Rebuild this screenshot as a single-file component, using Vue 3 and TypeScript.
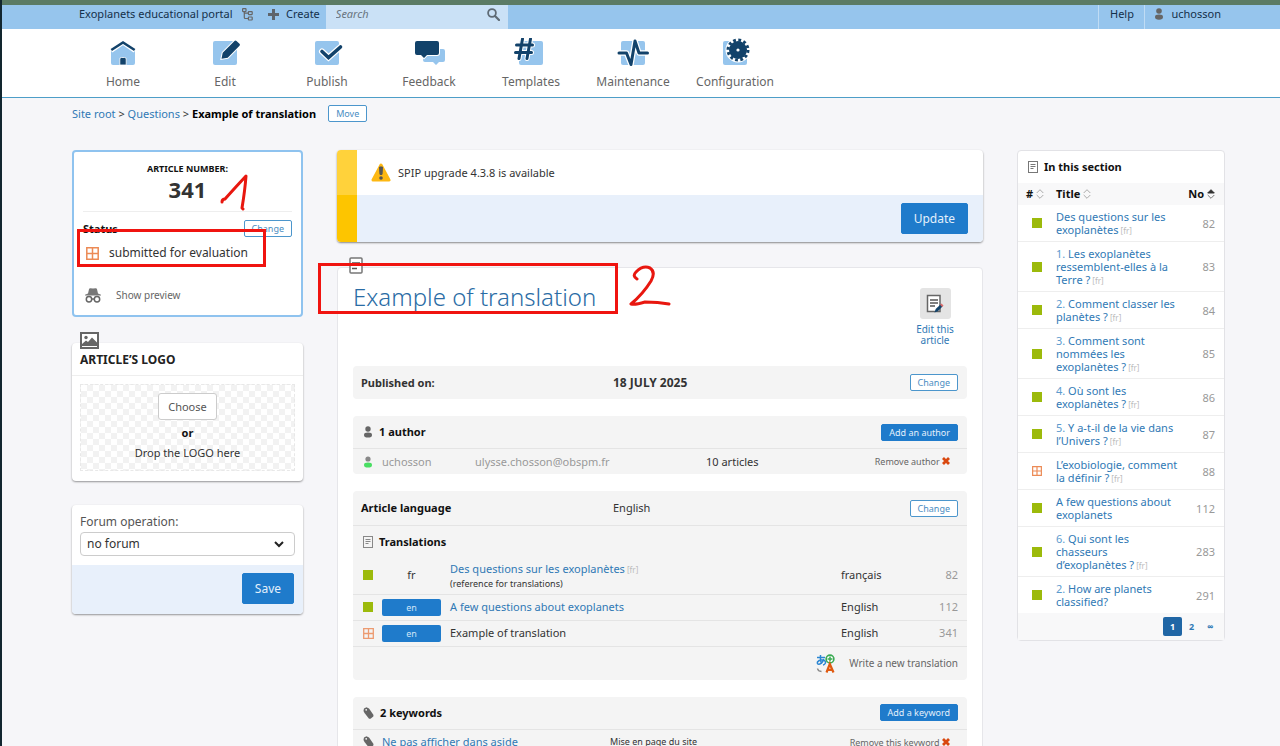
<script setup lang="ts">
import { ref } from 'vue'

type Status = 'published' | 'submitted'

interface Article {
  rank?: string
  title: string
  lang?: string
  no: number
  status: Status
}

interface Translation {
  code: string
  title: string
  note?: string
  tag?: string
  language: string
  no: number
  status: Status
  reference?: boolean
  current?: boolean
}

const menu: { id: string; label: string }[] = [
  { id: 'home', label: 'Home' },
  { id: 'edit', label: 'Edit' },
  { id: 'publish', label: 'Publish' },
  { id: 'feedback', label: 'Feedback' },
  { id: 'templates', label: 'Templates' },
  { id: 'maintenance', label: 'Maintenance' },
  { id: 'configuration', label: 'Configuration' },
]

const articles: Article[] = [
  { title: 'Des questions sur les exoplanètes', lang: 'fr', no: 82, status: 'published' },
  { rank: '1.', title: 'Les exoplanètes ressemblent-elles à la Terre\u00a0?', lang: 'fr', no: 83, status: 'published' },
  { rank: '2.', title: 'Comment classer les planètes\u00a0?', lang: 'fr', no: 84, status: 'published' },
  { rank: '3.', title: 'Comment sont nommées les exoplanètes\u00a0?', lang: 'fr', no: 85, status: 'published' },
  { rank: '4.', title: 'Où sont les exoplanètes\u00a0?', lang: 'fr', no: 86, status: 'published' },
  { rank: '5.', title: 'Y a-t-il de la vie dans l’Univers\u00a0?', lang: 'fr', no: 87, status: 'published' },
  { title: 'L’exobiologie, comment la définir\u00a0?', lang: 'fr', no: 88, status: 'submitted' },
  { title: 'A few questions about exoplanets', no: 112, status: 'published' },
  { rank: '6.', title: 'Qui sont les chasseurs d’exoplanètes\u00a0?', lang: 'fr', no: 283, status: 'published' },
  { rank: '2.', title: 'How are planets classified?', no: 291, status: 'published' },
]

const translations: Translation[] = [
  { code: 'fr', title: 'Des questions sur les exoplanètes', tag: 'fr', note: '(reference for translations)', language: 'français', no: 82, status: 'published', reference: true },
  { code: 'en', title: 'A few questions about exoplanets', language: 'English', no: 112, status: 'published' },
  { code: 'en', title: 'Example of translation', language: 'English', no: 341, status: 'submitted', current: true },
]

const search = ref('')
const forum = ref('no')
</script>

<template>
  <div class="page">
    <div class="strip"></div>
    <header class="topbar">
      <a href="#" class="site">Exoplanets educational portal</a>
      <a href="#" class="tree" aria-label="Site map">
        <svg width="11" height="13" viewBox="0 0 11 13" fill="none" stroke="#666" stroke-width="1.2">
          <rect x="0.6" y="0.6" width="3.4" height="3" rx="0.5" />
          <rect x="6.4" y="3.6" width="3.8" height="3" rx="0.5" />
          <rect x="6.4" y="9" width="3.8" height="3" rx="0.5" />
          <path d="M2.3 3.6V9.5Q2.3 10.5 3.3 10.5H6.4M2.3 5.1H6.4" />
        </svg>
      </a>
      <a href="#" class="create">
        <svg width="11" height="11" viewBox="0 0 11 11"><path d="M4 0h3v4h4v3H7v4H4V7H0V4h4z" fill="#5e646b" /></svg>
        Create
      </a>
      <form class="search" @submit.prevent>
        <input v-model="search" type="text" placeholder="Search" aria-label="Search" />
        <button type="submit" aria-label="Search">
          <svg width="13" height="13" viewBox="0 0 13 13" fill="none" stroke="#5f6b75">
            <circle cx="5" cy="5" r="3.9" stroke-width="1.8" />
            <path d="M8 8l4 4" stroke-width="2.2" stroke-linecap="round" />
          </svg>
        </button>
      </form>
      <a href="#" class="help">Help</a>
      <a href="#" class="user">
        <svg width="10" height="12" viewBox="0 0 10 12" fill="#666"><circle cx="5" cy="3" r="2.8" /><path d="M1 9q0-2.4 4-2.4T9 9q0 2.8-4 2.8T1 9z" /></svg>
        uchosson
      </a>
    </header>

    <nav class="menu">
      <a v-for="item in menu" :key="item.id" href="#">
        <svg width="36" height="30" viewBox="0 0 36 30">
          <template v-if="item.id === 'home'">
            <path d="M6 13.500L18 5l12 8.500V25q0 2-2 2H8q-2 0-2-2z" fill="#96c5ed" />
            <path d="M6 12.500L18 4.300l12 8.200" fill="none" stroke="#fff" stroke-width="5" />
            <path d="M6.300 12L18 4.500 29.700 12" fill="none" stroke="#12426a" stroke-width="2.500" />
            <path d="M14.800 27v-6q0-1.500 1.500-1.500h3.400q1.500 0 1.500 1.500v6z" fill="#12426a" stroke="#fff" stroke-width="0.800" />
          </template>
          <template v-else-if="item.id === 'edit'">
            <rect x="6" y="3" width="24" height="24" rx="2" fill="#96c5ed" />
            <path d="M14.500 20.800l1.200-6L27.500 2.900q1-1 2 0l3 2.900q1 1 0 2L20.700 19.700z" fill="#12426a" stroke="#fff" stroke-width="2" paint-order="stroke" />
          </template>
          <template v-else-if="item.id === 'publish'">
            <rect x="6" y="3" width="24" height="24" rx="2" fill="#96c5ed" />
            <path d="M13 13.500l6.500 6L31.500 9" fill="none" stroke="#fff" stroke-width="6" stroke-linecap="round" />
            <path d="M13 13.500l6.500 6L31.500 9" fill="none" stroke="#12426a" stroke-width="3.600" stroke-linecap="round" />
          </template>
          <template v-else-if="item.id === 'feedback'">
            <path d="M12 11h20q2 0 2 2v9q0 2-2 2h-4l-3 3-3-3H14q-2 0-2-2z" fill="#96c5ed" />
            <path d="M6 3h20q2 0 2 2v10q0 2-2 2h-10l-3 3L10 17H6q-2 0-2-2V5q0-2 2-2z" fill="#12426a" stroke="#fff" stroke-width="2" paint-order="stroke" />
          </template>
          <template v-else-if="item.id === 'templates'">
            <rect x="6" y="3" width="24" height="24" rx="2" fill="#96c5ed" />
            <g fill="none" stroke-linecap="round">
              <path d="M9.500 1L6 20.500M17.500 1L14 20.500M3.500 7h16M2.500 14.500h16" stroke="#fff" stroke-width="5" />
              <path d="M9.500 1L6 20.500M17.500 1L14 20.500M3.500 7h16M2.500 14.500h16" stroke="#12426a" stroke-width="3" />
            </g>
          </template>
          <template v-else-if="item.id === 'maintenance'">
            <rect x="6" y="3" width="24" height="24" rx="2" fill="#96c5ed" />
            <g fill="none" stroke-linecap="round" stroke-linejoin="round">
              <path d="M4 15h7.500l4.500 11.500L20 3l4 12h8.500" stroke="#fff" stroke-width="5.500" />
              <path d="M4 15h7.500l4.500 11.500L20 3l4 12h8.500" stroke="#12426a" stroke-width="3" />
            </g>
          </template>
          <template v-else>
            <rect x="6" y="3" width="24" height="24" rx="2" fill="#96c5ed" />
            <circle cx="21" cy="12" r="12.500" fill="#fff" />
            <circle cx="21" cy="12" r="9" fill="#12426a" />
            <circle cx="21" cy="12" r="10" fill="none" stroke="#12426a" stroke-width="3" stroke-dasharray="2.800 2.436" />
            <circle cx="21" cy="12" r="1.600" fill="#fff" />
          </template>
        </svg>
        <span>{{ item.label }}</span>
      </a>
    </nav>

    <div class="crumbs">
      <span><a href="#">Site root</a> &gt; <a href="#">Questions</a> &gt; <strong>Example of translation</strong></span>
      <button type="button" class="btn outline">Move</button>
    </div>

    <div class="columns">
      <aside class="left">
        <section class="infos">
          <div class="number">
            <h2>ARTICLE NUMBER:</h2>
            <p>341</p>
          </div>
          <div class="status-head">
            <strong>Status</strong>
            <button type="button" class="btn outline">Change</button>
          </div>
          <div class="status-line">
            <svg width="13" height="13" viewBox="0 0 13 13" fill="none" stroke="#ec8a55" stroke-width="1.500"><path d="M0.800 0.800h11.400v11.400H0.800zM6.500 0.800v11.400M0.800 6.500h11.400" /></svg>
            <span>submitted for evaluation</span>
          </div>
          <a href="#" class="preview">
            <svg width="16" height="15" viewBox="0 0 16 15">
              <path d="M3 5.500L4 1.200Q4.200 0.300 5.200 0.300L8 0.600 10.800 0.300Q11.800 0.300 12 1.200L13 5.500l3 1.200v0.800H0V6.700z" fill="#777" />
              <g fill="none" stroke="#666" stroke-width="1.500"><circle cx="4" cy="11.300" r="2.700" /><circle cx="12" cy="11.300" r="2.700" /><path d="M6.700 11h2.600" /></g>
            </svg>
            <span>Show preview</span>
          </a>
          <div class="mark mark-status"></div>
          <svg class="mark-one" width="28" height="38" viewBox="0 0 28 38" fill="none" stroke="#e8170f" stroke-width="3" stroke-linecap="round" stroke-linejoin="round"><path d="M2 28Q2 25 5 25Q13 16 26 2Q25 16 22 34l1 1" /></svg>
        </section>

        <section class="card logo">
          <svg class="badge" width="19" height="17" viewBox="0 0 19 17"><path d="M1 1h17v15H1z" fill="#fff" stroke="#666" stroke-width="2" /><circle cx="6" cy="5.500" r="1.700" fill="#666" /><path d="M2 14v-2l4-3.500 2 1.500 4-4.500 5 5V14z" fill="#666" /></svg>
          <h2>ARTICLE’S LOGO</h2>
          <div class="drop">
            <button type="button">Choose</button>
            <strong>or</strong>
            <span>Drop the LOGO here</span>
          </div>
        </section>

        <form class="card forum" @submit.prevent>
          <div class="field">
            <label for="forum">Forum operation:</label>
            <div class="select">
              <select id="forum" v-model="forum"><option value="no">no forum</option></select>
              <svg width="10" height="7" viewBox="0 0 10 7" fill="none" stroke="#222" stroke-width="2"><path d="M1 1l4 4 4-4" /></svg>
            </div>
          </div>
          <div class="actions"><button type="submit" class="btn big">Save</button></div>
        </form>
      </aside>

      <main>
        <section class="notice">
          <div class="notice-text">
            <svg width="20" height="19" viewBox="0 0 20 19"><path d="M10 2L18 17H2z" fill="#fdb813" stroke="#fdb813" stroke-width="3" stroke-linejoin="round" /><path d="M8.500 4h3l-0.500 7.500H9z" fill="#555" stroke="#555" /><circle cx="10" cy="15" r="1.800" fill="#555" /></svg>
            <span>SPIP upgrade 4.3.8 is available</span>
          </div>
          <div class="notice-actions"><button type="button" class="btn big">Update</button></div>
        </section>

        <article class="sheet">
          <svg class="badge" width="14" height="17" viewBox="0 0 14 17" fill="#fff" stroke="#777"><rect x="1" y="1" width="12" height="15" rx="1" stroke-width="1.500" /><path d="M3 6h8M3 11.500h5" stroke="#555" stroke-width="1.500" /></svg>
          <div class="title">
            <h1>Example of translation</h1>
            <a href="#" class="edit">
              <span class="tile">
                <svg width="18" height="20" viewBox="0 0 18 20"><rect x="1.500" y="1.500" width="12.500" height="16" fill="#fff" stroke="#666" stroke-width="1.500" /><path d="M4 6h8M4 9h8M4 12h5" stroke="#555" stroke-width="1.300" /><path d="M8.500 18.500l1.200-3.500 4.800-4.500 2 2-4.700 4.700z" fill="#12426a" /><path d="M14 10.800l1.500-1.300 2 2-1.300 1.500z" fill="#d96a6a" /></svg>
              </span>
              Edit this article
            </a>
          </div>

          <section class="block head-row">
            <strong>Published on:</strong>
            <strong class="date">18 JULY 2025</strong>
            <button type="button" class="btn outline">Change</button>
          </section>

          <section class="block">
            <div class="block-head">
              <svg width="10" height="12" viewBox="0 0 10 12" fill="#666"><circle cx="5" cy="3" r="2.700" /><path d="M1 9q0-2.400 4-2.400T9 9q0 2.600-4 2.600T1 9z" /></svg>
              <h2>1 author</h2>
              <button type="button" class="btn">Add an author</button>
            </div>
            <table class="authors">
              <colgroup><col class="c-icon" /><col class="c-name" /><col class="c-mail" /><col class="c-count" /><col /></colgroup>
              <tbody>
                <tr>
                  <td class="icon"><svg width="10" height="12" viewBox="0 0 10 12"><circle cx="5" cy="3" r="2.600" fill="#888" /><path d="M1 9q0-2.400 4-2.400T9 9q0 2.600-4 2.600T1 9z" fill="#4ade63" /></svg></td>
                  <td class="grey">uchosson</td>
                  <td class="grey">ulysse.chosson@obspm.fr</td>
                  <td>10 articles</td>
                  <td class="end"><button type="button" class="remove">Remove author <svg width="8" height="8" viewBox="0 0 8 8" stroke="#d9480f" stroke-width="2.800"><path d="M1 1l6 6M7 1L1 7" /></svg></button></td>
                </tr>
              </tbody>
            </table>
          </section>

          <section class="block">
            <div class="head-row lang">
              <strong>Article language</strong>
              <span>English</span>
              <button type="button" class="btn outline">Change</button>
            </div>
            <div class="block-head plain">
              <svg width="10" height="12" viewBox="0 0 10 12" fill="none" stroke="#888"><rect x="0.500" y="0.500" width="9" height="11" /><path d="M2.500 3.500h5M2.500 5.500h5M2.500 7.500h3" /></svg>
              <h2>Translations</h2>
            </div>
            <table class="translations">
              <colgroup><col class="c-icon" /><col class="c-code" /><col /><col class="c-lang" /><col class="c-no" /></colgroup>
              <tbody>
                <tr v-for="t in translations" :key="t.no">
                  <td class="icon">
                    <i v-if="t.status === 'published'" class="pub"></i>
                    <svg v-else width="11" height="11" viewBox="0 0 11 11" fill="none" stroke="#ec9a70" stroke-width="1.300"><path d="M0.700 0.700h9.600v9.600H0.700zM5.500 0.700v9.600M0.700 5.500h9.600" /></svg>
                  </td>
                  <td class="code"><span :class="{ pill: !t.reference }">{{ t.code }}</span></td>
                  <td>
                    <template v-if="t.current">{{ t.title }}</template>
                    <a v-else href="#">{{ t.title }}</a>
                    <small v-if="t.tag" class="tag">&nbsp;[{{ t.tag }}]</small>
                    <div v-if="t.note" class="note">{{ t.note }}</div>
                  </td>
                  <td>{{ t.language }}</td>
                  <td class="end grey">{{ t.no }}</td>
                </tr>
              </tbody>
            </table>
            <a href="#" class="new">
              <svg width="19" height="19" viewBox="0 0 19 19" fill="none">
                <path d="M1 3.500h8M4.500 1q-0.500 5 1 9M7.800 5Q6 10 3 10.200 0.800 10 1.500 8 3 5.500 7 6q3.500 1 2.200 3.500Q8.500 10.800 7 11" stroke="#2b86d2" stroke-width="1.500" />
                <circle cx="14" cy="5" r="3.900" fill="#fff" stroke="#3bab53" stroke-width="1.600" /><path d="M14 2.500v5M11.500 5h5" stroke="#3bab53" stroke-width="1.500" />
                <path d="M10.500 18.500L13.800 10l3.700 8.500M11.800 15.800h4.500" stroke="#e0590f" stroke-width="2.200" /><path d="M1.500 14.500q0.500 3 4 3" stroke="#888" stroke-width="1.400" />
              </svg>
              <span>Write a new translation</span>
            </a>
          </section>

          <section class="block">
            <div class="block-head">
              <svg width="11" height="12" viewBox="0 0 11 12"><path d="M0.500 4L1 1.500 3.500 0.300 6 1.500l4.500 6.500-0.200 1.500L7.500 11.700H6L1.500 6z" fill="#666" /><circle cx="3.200" cy="2.800" r="0.900" fill="#f4f4f4" /></svg>
              <h2>2 keywords</h2>
              <button type="button" class="btn">Add a keyword</button>
            </div>
            <table class="keywords">
              <colgroup><col class="c-icon" /><col class="c-word" /><col /><col class="c-remove" /></colgroup>
              <tbody>
                <tr>
                  <td class="icon"><svg width="11" height="12" viewBox="0 0 11 12"><path d="M0.500 4L1 1.500 3.500 0.300 6 1.500l4.500 6.500-0.200 1.500L7.500 11.700H6L1.500 6z" fill="#666" /><circle cx="3.200" cy="2.800" r="0.900" fill="#f4f4f4" /></svg></td>
                  <td><a href="#">Ne pas afficher dans aside</a></td>
                  <td class="group">Mise en page du site</td>
                  <td class="end"><button type="button" class="remove">Remove this keyword <svg width="8" height="8" viewBox="0 0 8 8" stroke="#d9480f" stroke-width="2.800"><path d="M1 1l6 6M7 1L1 7" /></svg></button></td>
                </tr>
              </tbody>
            </table>
          </section>
          <div class="mark mark-title"></div>
          <svg class="mark-two" width="44" height="42" viewBox="0 0 44 42" fill="none" stroke="#e8170f" stroke-width="3" stroke-linecap="round" stroke-linejoin="round"><path d="M10 14Q5 11 9 7 16 0 23 3q6 4 1 13Q16 29 4 39q4 1 14-2 13 0 24 2" /></svg>
        </article>
      </main>

      <aside class="section-list">
        <div class="list-head">
          <svg width="10" height="12" viewBox="0 0 10 12" fill="none" stroke="#777"><rect x="0.500" y="0.500" width="9" height="11" /><path d="M2.500 3.500h5M2.500 5.500h5M2.500 7.500h3" /></svg>
          <h2>In this section</h2>
        </div>
        <table>
          <colgroup><col class="s-icon" /><col /><col class="s-no" /></colgroup>
          <thead>
            <tr>
              <th scope="col"># <svg width="8" height="10" viewBox="0 0 8 10" fill="none" stroke="#aaa"><path d="M0.700 4L4 0.700 7.300 4M0.700 6L4 9.300 7.300 6" /></svg></th>
              <th scope="col">Title <svg width="8" height="10" viewBox="0 0 8 10" fill="none" stroke="#aaa"><path d="M0.700 4L4 0.700 7.300 4M0.700 6L4 9.300 7.300 6" /></svg></th>
              <th scope="col" class="end">No <svg width="8" height="10" viewBox="0 0 8 10" fill="none" stroke="#777"><path d="M0.700 4L4 0.700 7.300 4z" fill="#333" stroke="#333" /><path d="M0.700 6L4 9.300 7.300 6" /></svg></th>
            </tr>
          </thead>
          <tbody>
            <tr v-for="a in articles" :key="a.no">
              <td class="state">
                <i v-if="a.status === 'published'" class="pub"></i>
                <svg v-else width="10" height="10" viewBox="0 0 11 11" fill="none" stroke="#ec8a55" stroke-width="1.300"><path d="M0.700 0.700h9.600v9.600H0.700zM5.500 0.700v9.600M0.700 5.500h9.600" /></svg>
              </td>
              <td><a href="#"><span v-if="a.rank" class="rank">{{ a.rank }}&nbsp;</span>{{ a.title }}</a><small v-if="a.lang" class="tag">&nbsp;[{{ a.lang }}]</small></td>
              <td class="end grey">{{ a.no }}</td>
            </tr>
          </tbody>
        </table>
        <nav class="pager" aria-label="Pages"><a href="#" class="on">1</a><a href="#">2</a><a href="#">∞</a></nav>
      </aside>
    </div>
  </div>
</template>

<style>
body {
  background: #f6f6f9;
}
</style>

<style scoped>
.page {
  box-sizing: border-box;
  height: 100vh;
  overflow: hidden;
  border-left: 2px solid #12262f;
  background: #f6f6f9;
  color: #333;
  font: 11px/16px "Noto Sans", "Open Sans", sans-serif;
}
.page *,
.page *::before {
  box-sizing: border-box;
}
svg {
  flex: none;
}
a {
  color: #3079b5;
  text-decoration: none;
}
h1,
h2,
p {
  margin: 0;
}
button,
input,
select {
  font: inherit;
}
.strip {
  height: 5px;
  background: #5b7b65;
}
.topbar {
  display: flex;
  height: 24px;
  padding: 0 59px 0 77px;
  background: #96c5ed;
}
.topbar > a {
  display: flex;
  align-items: center;
  padding-bottom: 6px;
  color: #14304a;
}
.site {
  width: 163px;
  white-space: nowrap;
}
.topbar .create {
  gap: 7px;
  margin-left: 15px;
}
.search {
  display: flex;
  width: 182px;
  margin: 0 auto 0 6px;
  padding: 0 8px 6px 10px;
  background: #cae1f6;
}
.search input {
  width: 0;
  flex: 1;
  padding: 0;
  border: 0;
  background: none;
  outline: 0;
  font-style: italic;
}
.search input::placeholder {
  color: #68747e;
}
.search button {
  display: flex;
  align-items: center;
  padding: 0;
  border: 0;
  background: none;
}
.topbar .help {
  width: 46px;
  justify-content: center;
  border-left: 1px solid #c0dcf4;
}
.topbar .user {
  gap: 7px;
  padding-left: 9px;
  border-left: 1px solid #c0dcf4;
}
.menu {
  display: flex;
  height: 69px;
  padding: 7px 0 0 70px;
  border-bottom: 1px solid #4d9ec8;
  background: #fff;
  font-size: 12px;
}
.menu a {
  display: flex;
  width: 102px;
  flex-direction: column;
  align-items: center;
  gap: 6px;
  padding-top: 2px;
  color: #666;
}
.crumbs {
  display: flex;
  align-items: center;
  gap: 12px;
  padding: 7px 55px 0 70px;
  color: #333;
}
.crumbs strong {
  color: #000;
}
.btn {
  height: 17px;
  padding: 0 7px;
  border: 1px solid #1f7bcb;
  border-radius: 2px;
  background: #1f7bcb;
  color: #e4f0fb;
  font-size: 9px;
  line-height: 15px;
  white-space: nowrap;
}
.btn.outline {
  border-color: #4c96cc;
  background: #fff;
  color: #4a8dc2;
}
.btn.big {
  height: 31px;
  padding: 0 12px;
  font-size: 12px;
}
.columns {
  display: grid;
  grid-template-columns: 231px minmax(0, 1fr) 208px;
  align-items: start;
  gap: 34px;
  padding: 28px 55px 0 70px;
}
.infos {
  position: relative;
  padding: 10px 9px 12px;
  border: 2px solid #8fc3ef;
  border-radius: 4px;
  background: #fff;
}
.number {
  padding-bottom: 9px;
  border-bottom: 1px solid #eee;
  text-align: center;
}
.number h2 {
  color: #111;
  font-size: 9px;
  line-height: 14px;
}
.number p {
  font-size: 22px;
  font-weight: 700;
  line-height: 26px;
}
.status-head {
  display: flex;
  align-items: center;
  justify-content: space-between;
  padding-top: 8px;
  color: #111;
}
.status-line {
  display: flex;
  align-items: center;
  gap: 10px;
  padding: 8px 3px 0;
  font-size: 12px;
}
.preview {
  display: flex;
  align-items: center;
  gap: 15px;
  margin-top: 26px;
  padding-left: 2px;
  color: #666;
  font-size: 10px;
}
.mark {
  position: absolute;
  border: 3px solid #f01410;
  pointer-events: none;
}
.mark-status {
  top: 77px;
  left: 3px;
  width: 189px;
  height: 38px;
}
.mark-one {
  position: absolute;
  top: 22px;
  left: 146px;
}
.card {
  position: relative;
  border-radius: 4px;
  background: #fff;
  box-shadow: 0 1px 2px rgba(0, 0, 0, 0.4);
}
.logo {
  margin-top: 26px;
  padding-bottom: 10px;
}
.badge {
  position: absolute;
  top: -11px;
  left: 8px;
}
.logo h2 {
  padding: 9px 8px 7px;
  border-bottom: 1px solid #eee;
  color: #222;
  font-size: 12px;
  line-height: 16px;
}
.drop {
  display: flex;
  flex-direction: column;
  align-items: center;
  gap: 4px;
  margin: 8px 8px 0;
  padding: 8px 0 9px;
  border: 1px dashed #e8e8e8;
  background: repeating-conic-gradient(#f2f2f2 0 25%, #fff 0 50%) 0 0 / 12px 12px;
}
.drop strong {
  margin-top: 1px;
  color: #111;
}
.drop button {
  height: 27px;
  padding: 0 9px;
  border: 1px solid #ccc;
  border-radius: 3px;
  background: #fff;
  color: #555;
}
.forum {
  margin-top: 24px;
}
.field {
  padding: 9px 8px 9px;
}
.field label {
  display: block;
  padding-bottom: 2px;
  color: #555;
  font-size: 12px;
}
.select {
  display: flex;
  align-items: center;
  position: relative;
}
.select svg {
  position: absolute;
  right: 11px;
  pointer-events: none;
}
.select select {
  width: 100%;
  height: 24px;
  padding: 0 6px;
  border: 1px solid #ccc;
  border-radius: 4px;
  appearance: none;
  background: #fff;
  color: #333;
  font-size: 12px;
}
.actions,
.notice-actions {
  display: flex;
  justify-content: flex-end;
  padding: 8px 9px 10px;
  border-radius: 0 0 4px 4px;
  background: #e8f0fb;
}
.notice {
  overflow: hidden;
  border-radius: 4px;
  background: #fff;
  box-shadow: 0 1px 2px rgba(0, 0, 0, 0.45);
}
.notice-text {
  display: flex;
  align-items: center;
  gap: 7px;
  height: 45px;
  padding-left: 14px;
  border-left: 20px solid #ffd23b;
}
.notice-actions {
  padding: 8px 15px 8px;
  border-left: 20px solid #fdc500;
  border-radius: 0;
}
.sheet {
  position: relative;
  margin-top: 25px;
  padding: 20px 15px 30px;
  border: 1px solid #e6e6ea;
  border-radius: 4px;
  background: #fff;
}
.sheet .badge {
  left: 11px;
}
.title {
  display: flex;
  justify-content: space-between;
  height: 78px;
}
h1 {
  padding-top: 1px;
  color: #2a6ca5;
  font-size: 24px;
  font-weight: 300;
  line-height: 16px;
}
.edit {
  display: flex;
  width: 64px;
  flex-direction: column;
  align-items: center;
  gap: 5px;
  font-size: 10px;
  line-height: 11px;
  text-align: center;
}
.tile {
  display: grid;
  place-items: center;
  width: 31px;
  height: 31px;
  border-radius: 3px;
  background: #e4e4e4;
}
.mark-title {
  top: -5px;
  left: -20px;
  width: 300px;
  height: 51px;
}
.mark-two {
  position: absolute;
  top: -3px;
  left: 289px;
}
.block {
  overflow: hidden;
  margin-bottom: 17px;
  border-radius: 4px;
  background: #f4f4f4;
}
.head-row {
  display: grid;
  grid-template-columns: 252px 1fr auto;
  align-items: center;
  height: 33px;
  padding: 0 9px 0 8px;
}
.head-row.lang {
  height: 35px;
  border-bottom: 1px solid #e4e4e4;
}
.lang strong {
  color: #111;
}
.date {
  font-size: 12px;
}
.block-head {
  display: flex;
  align-items: center;
  gap: 6px;
  height: 33px;
  padding: 0 9px 0 10px;
  border-bottom: 1px solid #e4e4e4;
}
.block-head.plain {
  height: 31px;
  border: 0;
}
.block-head h2,
.list-head h2 {
  flex: 1;
  color: #111;
  font-size: 11px;
}
table {
  width: 100%;
  border-collapse: collapse;
  table-layout: fixed;
}
td,
th {
  padding: 0;
  text-align: left;
}
.block td {
  height: 25px;
  white-space: nowrap;
}
.block .translations td {
  height: 26px;
}
.c-icon { width: 29px; }
.c-name { width: 93px; }
.c-mail { width: 231px; }
.c-count { width: 110px; }
.c-code { width: 68px; }
.c-lang { width: 78px; }
.c-no { width: 48px; }
.c-word { width: 228px; }
.c-remove { width: 130px; }
.icon {
  vertical-align: middle;
}
.block .icon {
  padding-left: 10px;
}
.icon svg,
.icon i,
.state svg,
.state i {
  display: block;
}
.pub {
  width: 10px;
  height: 10px;
  background: #9cba0b;
}
.grey {
  color: #999;
}
.block .end {
  padding-right: 9px;
}
.end {
  text-align: right;
}
.remove {
  padding: 0 8px 0 0;
  border: 0;
  background: none;
  color: #666;
  font-size: 9px;
  white-space: nowrap;
}
.translations tr {
  border-bottom: 1px solid #e4e4e4;
}
.block .translations tr:first-child td {
  height: 37px;
}
.code span {
  display: block;
  width: 59px;
  text-align: center;
}
.code .pill {
  border-radius: 2px;
  background: #1f7bcb;
  color: #cfe4f7;
  font-size: 9px;
  line-height: 17px;
}
.tag {
  color: #bbb;
  font-size: 8px;
}
.note {
  font-size: 9px;
  line-height: 12px;
}
.new {
  display: flex;
  align-items: center;
  justify-content: flex-end;
  gap: 14px;
  height: 33px;
  padding-right: 9px;
  color: #666;
  font-size: 10px;
}
.group {
  font-size: 9px;
}
.section-list {
  border: 1px solid #e2e2e6;
  border-radius: 4px;
  background: #fff;
}
.list-head {
  display: flex;
  align-items: center;
  gap: 6px;
  height: 32px;
  padding-left: 10px;
}
.s-icon { width: 38px; }
.s-no { width: 45px; }
thead tr {
  background: #f8f8f9;
}
th {
  height: 22px;
  color: #111;
  white-space: nowrap;
}
th:first-child {
  padding-left: 8px;
}
th svg {
  vertical-align: -1px;
}
.section-list .end {
  padding-right: 9px;
}
.section-list td {
  padding: 5px 0;
  line-height: 13px;
}
.section-list .state {
  padding-left: 14px;
}
.section-list tbody tr + tr {
  border-top: 1px solid #eee;
}
.rank {
  color: #5d9bce;
}
.section-list .tag {
  line-height: 10px;
}
.pager {
  display: flex;
  justify-content: flex-end;
  height: 27px;
  padding: 4px 4px;
  background: #f8f8f9;
  font-size: 9px;
  font-weight: 700;
  line-height: 19px;
  text-align: center;
}
.pager a {
  width: 19px;
}
.pager .on {
  border-radius: 2px;
  background: #2066a5;
  color: #fff;
}
</style>
